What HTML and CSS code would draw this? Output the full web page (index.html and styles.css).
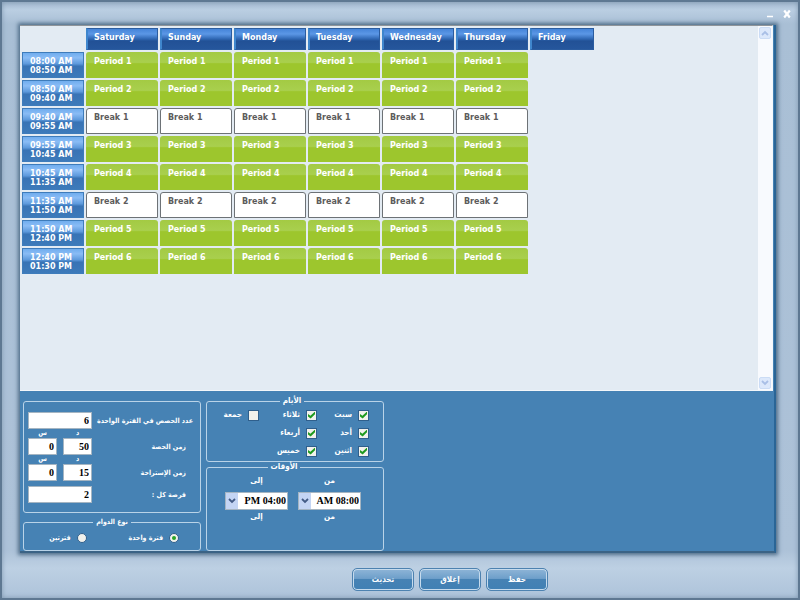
FILE: index.html
```html
<!DOCTYPE html>
<html lang="ar">
<head>
  <meta charset="UTF-8">
  <meta name="viewport" content="width=device-width, initial-scale=1.0">
  <title>Periods</title>
  <link rel="stylesheet" href="styles.css">
</head>
<body>
  <div class="window">
    <header class="title-bar">
      <button type="button" class="win-btn" aria-label="Minimize">
        <svg width="8" height="10" viewBox="0 0 8 10"><path d="M1 7.500h6" stroke="#fff" stroke-width="1.500"/></svg>
      </button>
      <button type="button" class="win-btn" aria-label="Close">
        <svg width="8" height="10" viewBox="0 0 8 10"><path d="M1.200 1.500l5.600 7M6.800 1.500l-5.600 7" stroke="#fff" stroke-width="2.200"/></svg>
      </button>
    </header>

    <main class="panel">
      <section class="schedule">
        <div class="schedule-body">
          <table class="timetable" lang="en">
            <thead>
              <tr>
                <td></td>
                <th>Saturday</th><th>Sunday</th><th>Monday</th><th>Tuesday</th><th>Wednesday</th><th>Thursday</th><th class="off">Friday</th>
              </tr>
            </thead>
            <tbody>
              <tr>
                <th>08:00 AM<br>08:50 AM</th>
                <td>Period 1</td><td>Period 1</td><td>Period 1</td><td>Period 1</td><td>Period 1</td><td>Period 1</td>
              </tr>
              <tr>
                <th>08:50 AM<br>09:40 AM</th>
                <td>Period 2</td><td>Period 2</td><td>Period 2</td><td>Period 2</td><td>Period 2</td><td>Period 2</td>
              </tr>
              <tr class="break">
                <th>09:40 AM<br>09:55 AM</th>
                <td>Break 1</td><td>Break 1</td><td>Break 1</td><td>Break 1</td><td>Break 1</td><td>Break 1</td>
              </tr>
              <tr>
                <th>09:55 AM<br>10:45 AM</th>
                <td>Period 3</td><td>Period 3</td><td>Period 3</td><td>Period 3</td><td>Period 3</td><td>Period 3</td>
              </tr>
              <tr>
                <th>10:45 AM<br>11:35 AM</th>
                <td>Period 4</td><td>Period 4</td><td>Period 4</td><td>Period 4</td><td>Period 4</td><td>Period 4</td>
              </tr>
              <tr class="break">
                <th>11:35 AM<br>11:50 AM</th>
                <td>Break 2</td><td>Break 2</td><td>Break 2</td><td>Break 2</td><td>Break 2</td><td>Break 2</td>
              </tr>
              <tr>
                <th>11:50 AM<br>12:40 PM</th>
                <td>Period 5</td><td>Period 5</td><td>Period 5</td><td>Period 5</td><td>Period 5</td><td>Period 5</td>
              </tr>
              <tr>
                <th>12:40 PM<br>01:30 PM</th>
                <td>Period 6</td><td>Period 6</td><td>Period 6</td><td>Period 6</td><td>Period 6</td><td>Period 6</td>
              </tr>
            </tbody>
          </table>
        </div>
        <div class="scrollbar">
          <button type="button" aria-label="Scroll up">
            <svg width="8" height="6" viewBox="0 0 8 6"><path d="M1 5l3-3 3 3" fill="none" stroke="#a9bfe6" stroke-width="1.800"/></svg>
          </button>
          <button type="button" aria-label="Scroll down">
            <svg width="8" height="6" viewBox="0 0 8 6"><path d="M1 1l3 3 3-3" fill="none" stroke="#a9bfe6" stroke-width="1.800"/></svg>
          </button>
        </div>
      </section>

      <form class="settings" id="settings">
        <div class="column">
          <fieldset class="box periods" dir="rtl">
            <div class="row">
              <label for="count">عدد الحصص في الفترة الواحدة</label>
              <input type="text" id="count" value="6">
            </div>
            <div class="units"><span>د</span><span>س</span></div>
            <div class="row indent">
              <label for="period-min">زمن الحصة</label>
              <div class="pair">
                <input type="text" id="period-min" value="50">
                <input type="text" aria-label="ساعات الحصة" value="0">
              </div>
            </div>
            <div class="units"><span>د</span><span>س</span></div>
            <div class="row indent">
              <label for="break-min">زمن الإستراحة</label>
              <div class="pair">
                <input type="text" id="break-min" value="15">
                <input type="text" aria-label="ساعات الإستراحة" value="0">
              </div>
            </div>
            <div class="row indent last">
              <label for="break-every">فرصة كل :</label>
              <input type="text" id="break-every" value="2">
            </div>
          </fieldset>

          <fieldset class="box shift" dir="rtl">
            <legend>نوع الدوام</legend>
            <label class="option"><input type="radio" name="shift" checked>فترة واحدة</label>
            <label class="option"><input type="radio" name="shift">فترتين</label>
          </fieldset>
        </div>

        <div class="column">
          <fieldset class="box days" dir="rtl">
            <legend>الأيام</legend>
            <label class="option"><input type="checkbox" checked>سبت</label>
            <label class="option"><input type="checkbox" checked>ثلاثاء</label>
            <label class="option"><input type="checkbox">جمعة</label>
            <label class="option"><input type="checkbox" checked>أحد</label>
            <label class="option second"><input type="checkbox" checked>أربعاء</label>
            <label class="option first"><input type="checkbox" checked>اثنين</label>
            <label class="option second"><input type="checkbox" checked>خميس</label>
          </fieldset>

          <fieldset class="box times" dir="rtl">
            <legend>الأوقات</legend>
            <div class="time">
              <label for="from">من</label>
              <div class="combo">
                <select id="from"><option>08:00 AM</option></select>
                <span class="arrow"><svg width="8" height="6" viewBox="0 0 8 6"><path d="M1 1l3 3 3-3" fill="none" stroke="#435b85" stroke-width="1.800"/></svg></span>
              </div>
              <span>من</span>
            </div>
            <div class="time">
              <label for="to">إلى</label>
              <div class="combo">
                <select id="to"><option>04:00 PM</option></select>
                <span class="arrow"><svg width="8" height="6" viewBox="0 0 8 6"><path d="M1 1l3 3 3-3" fill="none" stroke="#435b85" stroke-width="1.800"/></svg></span>
              </div>
              <span>إلى</span>
            </div>
          </fieldset>
        </div>
      </form>
    </main>

    <footer class="actions">
      <button type="button" class="btn">تحديث</button>
      <button type="button" class="btn">إغلاق</button>
      <button type="submit" form="settings" class="btn">حفظ</button>
    </footer>
  </div>
</body>
</html>
```

FILE: styles.css
```css
:root {
  --blue: #4682b4;
  --frame: #adc2d8;
  --edge: #5e7892;
  --line: #b9d3e8;
  --sheet: #e3ebf3;
}

* {
  box-sizing: border-box;
  margin: 0;
  padding: 0;
}

body {
  font-family: "DejaVu Sans", Verdana, sans-serif;
  font-size: 8px;
  font-weight: bold;
  line-height: 10px;
  color: #fff;
}

button,
input,
select {
  font: inherit;
  color: inherit;
}

.window {
  min-height: 100vh;
  display: flex;
  flex-direction: column;
  padding: 0 22px 0 18px;
  border: 2px solid var(--edge);
  background: linear-gradient(#a4b9cf, #bacee2 8px, #a9bfd5 22px, var(--frame) 92%, #bdd0e3 95%, #adc3da);
  box-shadow: inset 0 0 5px #7f98b1;
}

.title-bar {
  height: 23px;
  display: flex;
  justify-content: flex-end;
  align-items: center;
  gap: 9px;
  margin-right: -15px;
}

.win-btn {
  display: flex;
  border: none;
  background: none;
}

.panel {
  flex: 1;
  display: flex;
  flex-direction: column;
  background: var(--blue);
  border-right: 2px solid #2a6596;
  border-bottom: 2px solid #3b6385;
  box-shadow: 0 0 4px 2px #4f6d89;
}

.schedule {
  flex: 1;
  display: flex;
  margin-right: 1px;
  border: 1px solid #f4f7fa;
  border-top-color: #8f9499;
  border-left: none;
  background: var(--sheet);
}

.schedule-body {
  flex: 1;
}

/* timetable */
.timetable {
  border-spacing: 2px;
  table-layout: fixed;
  width: 574px;
}

.timetable th,
.timetable td {
  width: 72px;
  text-align: left;
  vertical-align: top;
}

.timetable thead td {
  width: 62px;
}

.timetable thead th {
  height: 22px;
  padding: 4px 6px;
  border: 1px solid #2b5c9f;
  border-left: 2px solid #3f86cd;
  background: linear-gradient(#4584d8, #5b97e6 25%, #2e66b2 50%, #225196 60%, #25569c);
}

.timetable thead th.off {
  width: 64px;
}

.timetable tbody th {
  height: 26px;
  padding: 4px 7px 2px;
  line-height: 9px;
  border: 1px solid #3e7cbb;
  background: linear-gradient(#70adee, #8abcf5 20%, #5d99dc 45%, #3873b5 55%, #3d7aba);
}

.timetable tbody td {
  padding: 5px 8px;
  border-radius: 3px 3px 0 0;
  background: linear-gradient(#a3ca43, #a9cf4e 40%, #9dc62d 45%, #9dc62d);
}

.timetable .break td {
  padding: 4px 7px;
  border: 1px solid #6d7276;
  color: #5c5c5c;
  background: #fff;
}

.scrollbar {
  width: 14px;
  display: flex;
  flex-direction: column;
  justify-content: space-between;
  padding: 1px;
  background: #f8fafe;
}

.scrollbar button {
  height: 12px;
  display: grid;
  place-items: center;
  border: 1px solid #cbdcf5;
  border-radius: 2px;
  background: #dce8fb;
}

/* settings */
.settings {
  display: flex;
  gap: 5px;
  padding: 5px 3px 0;
  font-family: "DejaVu Sans Condensed", "DejaVu Sans", sans-serif;
  white-space: nowrap;
}

.column {
  width: 178px;
  display: flex;
  flex-direction: column;
}

.box {
  min-width: 0;
  border: 1px solid var(--line);
  border-radius: 3px;
}

.box legend {
  margin: 0 auto;
  padding: 0 3px;
}

.periods,
.shift {
  font-size: 7px;
}

.periods {
  height: 112px;
  margin-top: 5px;
  padding: 10px 7px 0 4px;
}

.row {
  display: flex;
  justify-content: space-between;
  align-items: center;
}

.indent {
  padding-right: 7px;
}

.last {
  margin-top: 5px;
}

.row input {
  width: 64px;
  height: 17px;
  padding: 0 2px;
  border: 1px solid #a5b5c2;
  background: #fff;
  color: #000;
  font-family: "Liberation Serif", "Times New Roman", serif;
  font-size: 10px;
  direction: ltr;
  text-align: right;
}

.pair {
  display: flex;
  gap: 6px;
}

.pair input {
  width: 29px;
}

.units {
  width: 64px;
  height: 9px;
  line-height: 9px;
  display: flex;
  gap: 6px;
  margin-right: auto;
}

.units span {
  flex: 1;
  text-align: center;
}

.option {
  display: flex;
  align-items: center;
  gap: 6px;
}

.option input {
  appearance: none;
  width: 11px;
  height: 11px;
  display: grid;
  place-items: center;
  border: 1px solid #2f5f8c;
  background: #f1f1ec;
}

.option input[type="radio"] {
  width: 10px;
  height: 10px;
  border-radius: 50%;
}

.option input[type="radio"]:checked::before {
  content: "";
  width: 4px;
  height: 4px;
  border-radius: 50%;
  background: #28a428;
}

.option input[type="checkbox"]:checked::before {
  content: "";
  width: 7px;
  height: 7px;
  background: #1f9a1f;
  clip-path: polygon(0 35%, 35% 60%, 100% 0, 100% 40%, 38% 100%, 0 70%);
}

.shift {
  height: 34px;
  margin-top: 4px;
  padding: 0 21px;
  display: flex;
  gap: 42px;
}

.shift .option {
  height: 22px;
}

.days {
  height: 66px;
  padding: 0 14px 0 8px;
  display: grid;
  grid-template-columns: 52px 58px 1fr;
  grid-auto-rows: 18px;
  align-content: start;
}

.days .first {
  grid-column: 1;
}

.days .second {
  grid-column: 2;
}

.times {
  height: 89px;
  display: flex;
  gap: 10px;
  padding: 4px 22px 0 0;
}

.time {
  width: 63px;
  display: flex;
  flex-direction: column;
  align-items: center;
}

.combo {
  position: relative;
  width: 100%;
  margin: 6px 0 2px;
}

.combo select {
  appearance: none;
  display: block;
  width: 100%;
  height: 18px;
  padding: 0 1px 0 14px;
  border: 1px solid #a5b5c2;
  border-radius: 0;
  background: #fff;
  color: #000;
  font-family: "Liberation Serif", "Times New Roman", serif;
  font-size: 10px;
}

.combo .arrow {
  position: absolute;
  top: 1px;
  bottom: 1px;
  left: 1px;
  width: 12px;
  display: grid;
  place-items: center;
  background: #c4d5f4;
  pointer-events: none;
}

.actions {
  height: 45px;
  display: flex;
  justify-content: center;
  gap: 5px;
  padding: 15px 0 0 104px;
}

.btn {
  width: 62px;
  height: 23px;
  border: 1px solid #4d82b0;
  border-radius: 5px;
  background: linear-gradient(#8fb5d7, #6e9fca 45%, #4682b4 50%, #4180b4);
  box-shadow: inset 0 0 0 1px #c6dbed;
  font-family: "DejaVu Sans Condensed", "DejaVu Sans", sans-serif;
}
```
